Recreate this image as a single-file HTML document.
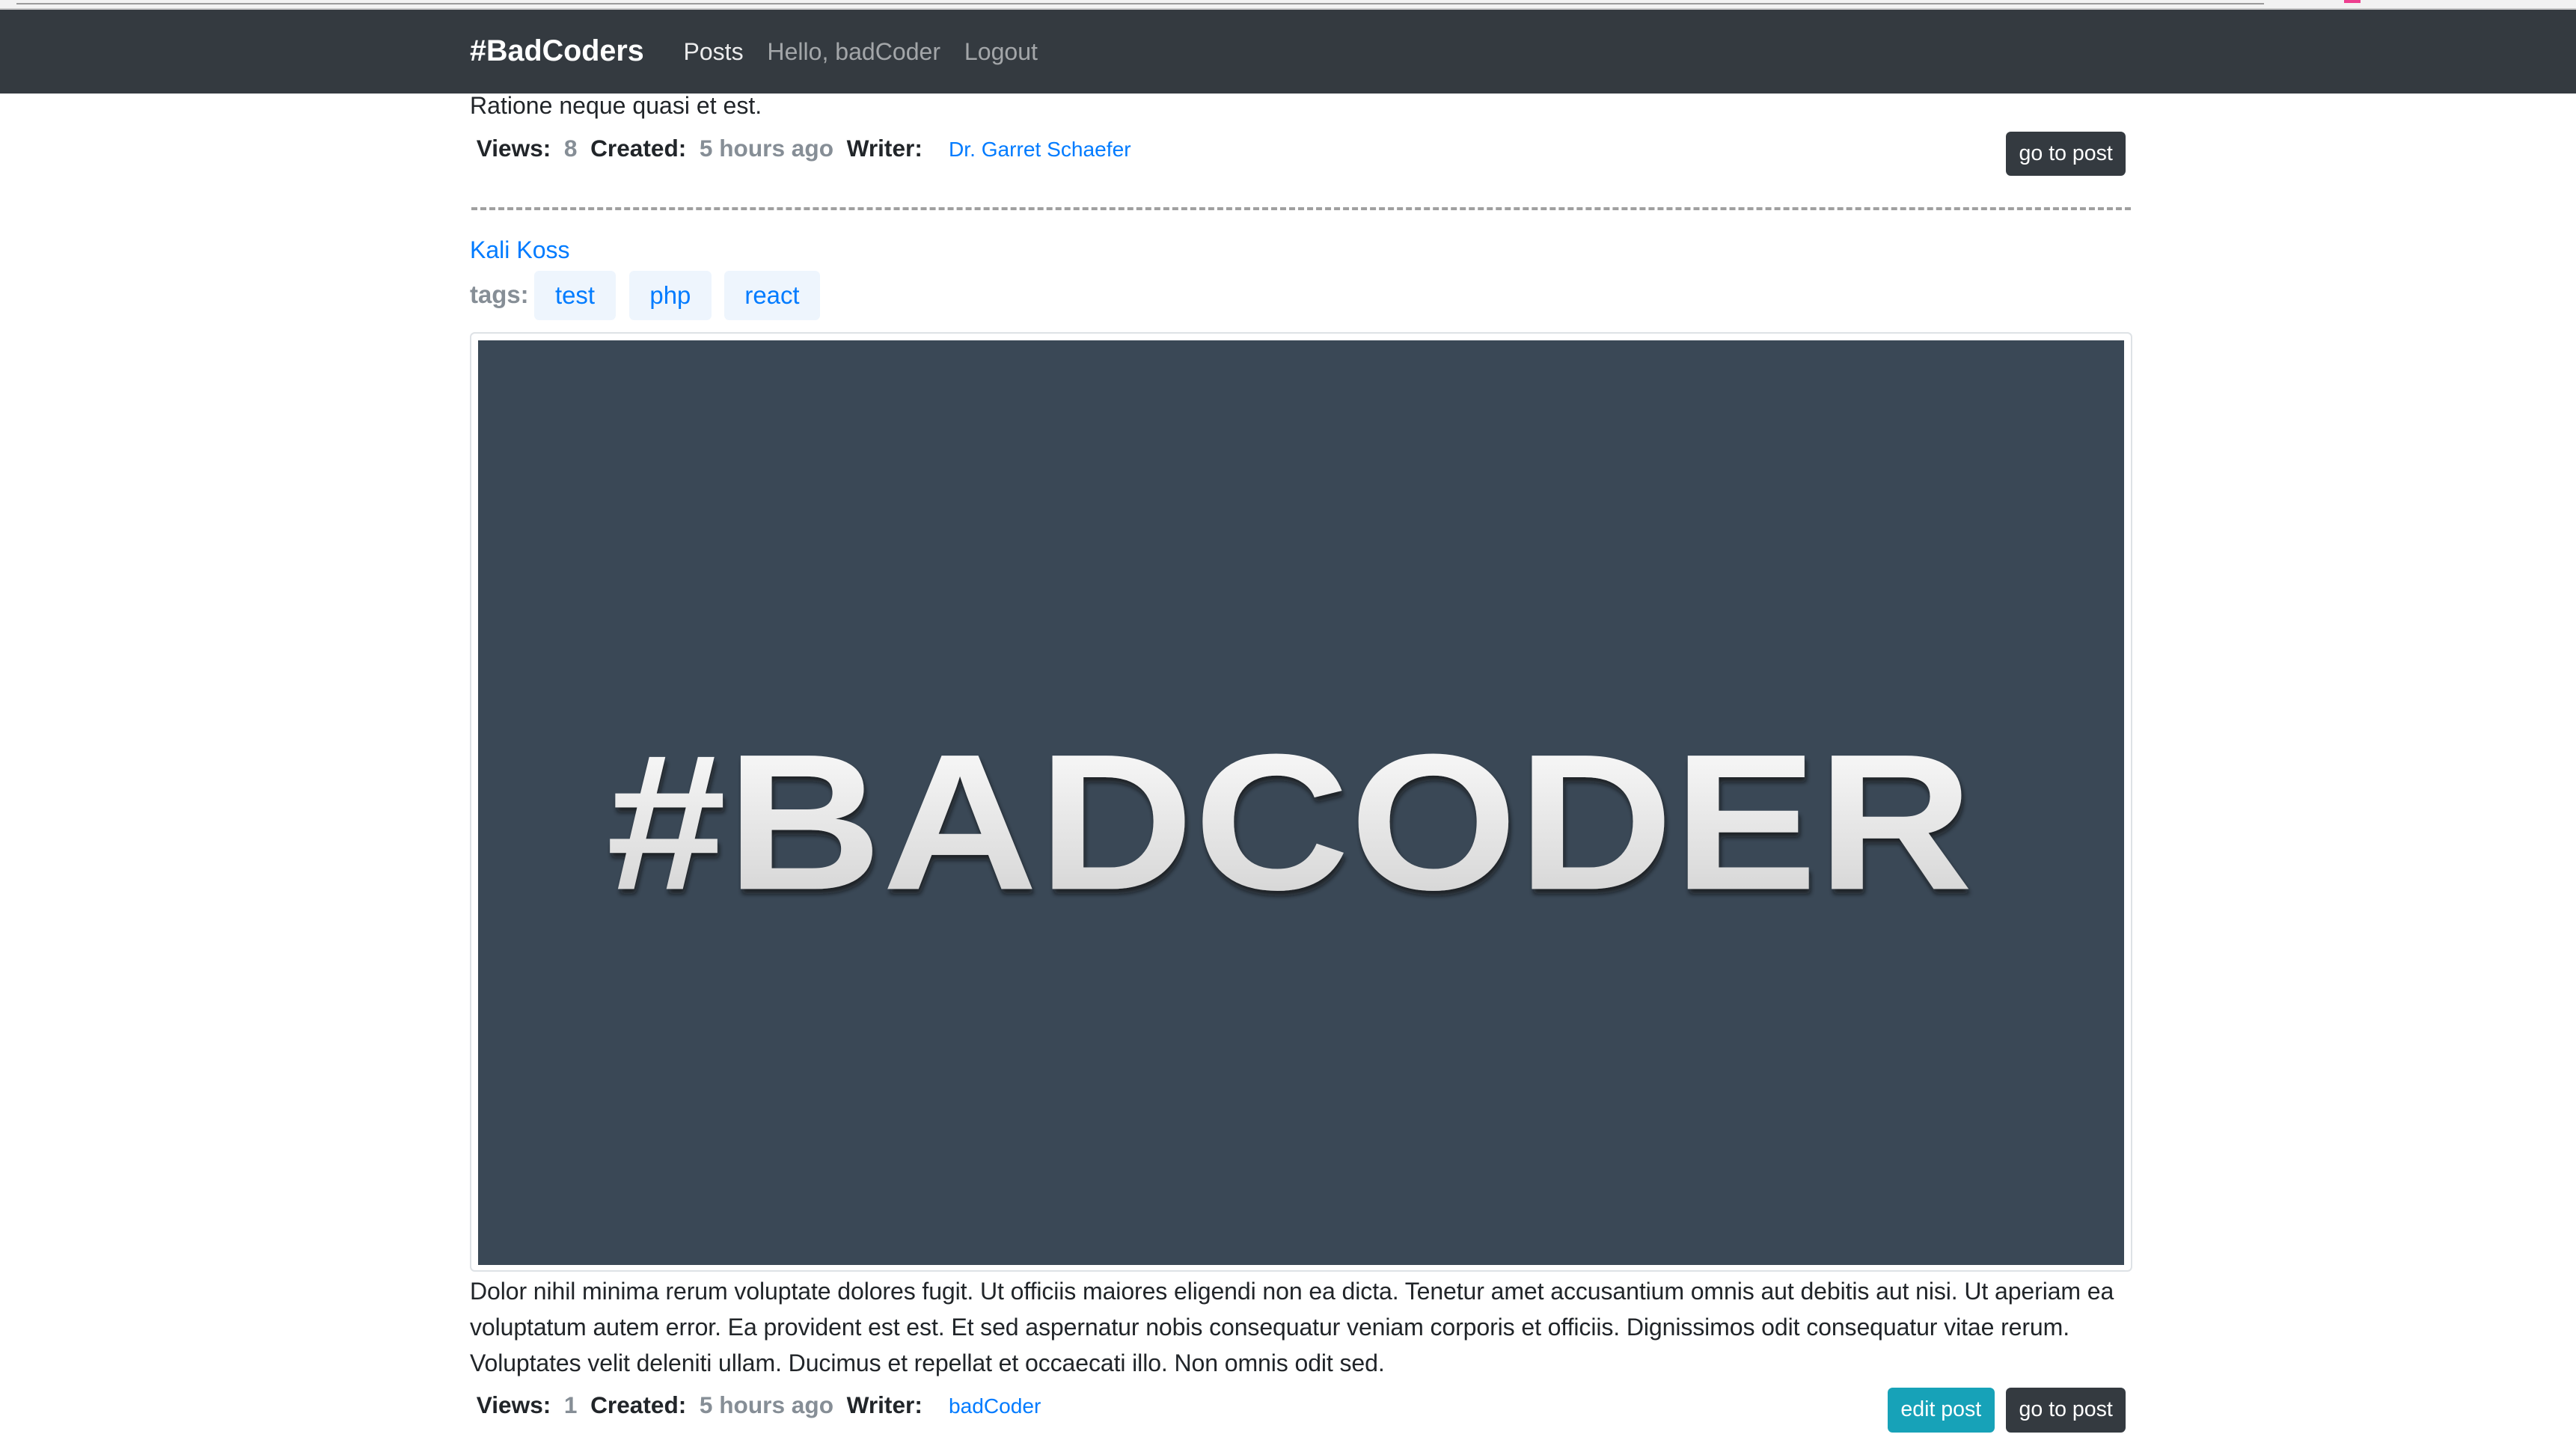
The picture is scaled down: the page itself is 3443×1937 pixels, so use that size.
<!DOCTYPE html>
<html><head><meta charset="utf-8"><style>
html,body{margin:0;padding:0;background:#fff;overflow:hidden}
body{zoom:2.19579;width:1568px;height:882px;position:relative;font-family:"Liberation Sans",Arial,sans-serif;color:#212529}
.a{position:absolute;white-space:nowrap}
.strip{left:0;top:0;width:1568px;height:6px;background:#f2f2f2;border-bottom:1px solid #c8c8c8;box-sizing:border-box}
.strip .bar{position:absolute;left:10px;top:0;width:1368px;height:2px;border-bottom:1px solid #9a9a9a}
.nav{left:0;top:6px;width:1568px;height:51px;background:#343a40}
.brand{left:286px;top:21px;font-size:18px;font-weight:bold;color:#fff}
.nl{top:23px;font-size:14.6px;color:rgba(255,255,255,.55)}
.meta{font-size:14.4px;font-weight:bold}
.meta .g{color:#868e96}
.meta .w{color:#007bff;font-weight:normal;font-size:12.8px}
.meta .s{display:inline-block;width:4px}
.btn{font-size:13px;color:#fff;border-radius:3px;text-align:center;line-height:27px;height:27px}
.tag{top:165px;height:30px;line-height:30px;background:#eef5fd;color:#007bff;font-size:15px;text-align:center;border-radius:3px}
p.body{position:absolute;left:286px;top:775px;width:1012px;margin:0;font-size:14.6px;letter-spacing:-0.05px;line-height:22px}
</style></head><body>
<div class="a strip"><div class="bar"></div></div>
<div class="a" style="left:1427px;top:0;width:10px;height:2px;background:#ee3f8f"></div>
<div class="a nav"></div>
<div class="a brand">#BadCoders</div>
<div class="a nl" style="left:416px;color:#fff;opacity:.9">Posts</div>
<div class="a nl" style="left:467px">Hello, badCoder</div>
<div class="a nl" style="left:587px">Logout</div>

<div class="a" style="left:286px;top:56px;font-size:14.6px">Ratione neque quasi et est.</div>
<div class="a meta" style="left:290px;top:82px">Views:&nbsp; <span class="g">8</span><span class="s"></span>&nbsp;Created:&nbsp; <span class="g">5 hours ago</span><span class="s"></span>&nbsp;Writer:<span class="s"></span>&nbsp;&nbsp; <span class="w">Dr. Garret Schaefer</span></div>
<div class="a btn" style="left:1221px;top:80px;width:73px;background:#343a40">go to post</div>
<div class="a" style="left:287px;top:126px;width:1010px;border-top:2px dashed #a0a0a0"></div>

<div class="a" style="left:286px;top:144px;font-size:14.6px;color:#007bff">Kali Koss</div>
<div class="a" style="left:286px;top:171px;font-size:15px;font-weight:bold;color:#868e96">tags:</div>
<div class="a tag" style="left:325px;width:50px">test</div>
<div class="a tag" style="left:383px;width:50px">php</div>
<div class="a tag" style="left:441px;width:58px">react</div>

<div class="a" style="left:286px;top:202px;width:1012px;height:572px;border:1px solid #dee2e6;border-radius:3px;box-sizing:border-box;background:#fff"></div>
<div class="a" style="left:291px;top:207px;width:1002px;height:563px;background:#3a4856">
<svg width="1002" height="563" viewBox="0 0 1002 563">
<defs><linearGradient id="gr" x1="0" y1="0" x2="0" y2="1"><stop offset="0" stop-color="#ffffff"/><stop offset="1" stop-color="#cfcfcf"/></linearGradient>
<filter id="sh"><feDropShadow dx="1" dy="3" stdDeviation="1.5" flood-color="#111" flood-opacity=".7"/></filter></defs>
<text x="78" y="334" font-family="Liberation Sans, sans-serif" font-weight="bold" font-size="118" fill="url(#gr)" filter="url(#sh)" textLength="832" lengthAdjust="spacingAndGlyphs">#BADCODER</text>
</svg></div>

<p class="body">Dolor nihil minima rerum voluptate dolores fugit. Ut officiis maiores eligendi non ea dicta. Tenetur amet accusantium omnis aut debitis aut nisi. Ut aperiam ea voluptatum autem error. Ea provident est est. Et sed aspernatur nobis consequatur veniam corporis et officiis. Dignissimos odit consequatur vitae rerum. Voluptates velit deleniti ullam. Ducimus et repellat et occaecati illo. Non omnis odit sed.</p>
<div class="a meta" style="left:290px;top:847px">Views:&nbsp; <span class="g">1</span><span class="s"></span>&nbsp;Created:&nbsp; <span class="g">5 hours ago</span><span class="s"></span>&nbsp;Writer:<span class="s"></span>&nbsp;&nbsp; <span class="w">badCoder</span></div>
<div class="a btn" style="left:1149px;top:845px;width:65px;background:#17a2b8">edit post</div>
<div class="a btn" style="left:1221px;top:845px;width:73px;background:#343a40">go to post</div>
</body></html>
